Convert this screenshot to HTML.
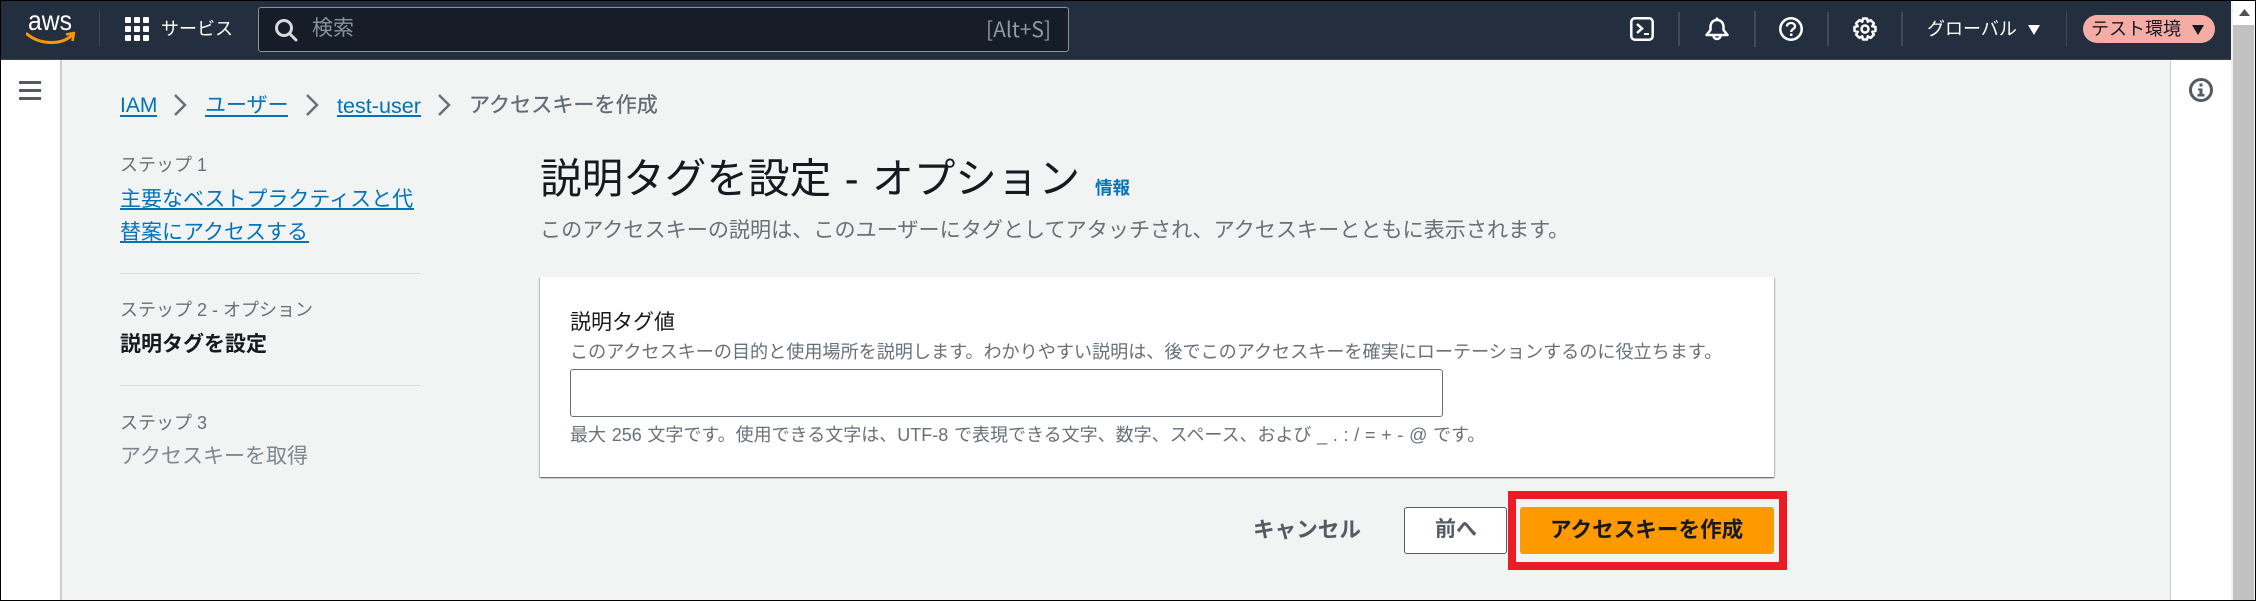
<!DOCTYPE html>
<html lang="ja">
<head>
<meta charset="utf-8">
<title>説明タグを設定</title>
<style>
html,body{margin:0;padding:0;width:2256px;height:601px;overflow:hidden;background:#000}
body{position:relative;font-family:"Liberation Sans","Noto Sans CJK JP",sans-serif}
.a{position:absolute}
.t{position:absolute;white-space:nowrap;line-height:30px;height:30px}
a{color:#0073bb;text-decoration:none}
.u{border-bottom:0;background:#0073bb}
.d{position:absolute;width:2px;background:#414b58;top:12px;height:34px}
</style>
</head>
<body>
<!-- frame -->
<div class="a" style="left:1px;top:1px;width:2254px;height:599px;background:#f2f3f3"></div>
<!-- header -->
<div class="a" style="left:1px;top:1px;width:2230px;height:58px;background:#232f3e;border-bottom:1px solid #3b4450"></div>
<svg class="a" style="left:26px;top:10px" width="50" height="36" viewBox="0 0 50 36">
<text x="2" y="20" font-family="Liberation Sans" font-size="28" fill="#fff" textLength="44" lengthAdjust="spacingAndGlyphs">aws</text>
<path d="M1 24C14 35 35 35 45 26" fill="none" stroke="#f90" stroke-width="3" stroke-linecap="round"/>
<path d="M40 24.5L48 23L46.5 31" fill="none" stroke="#f90" stroke-width="2.5" stroke-linejoin="round"/>
</svg>
<div class="a" style="left:99px;top:12px;width:1px;height:34px;background:#414b58"></div>
<svg class="a" style="left:125px;top:17px" width="24" height="24" fill="#fff">
<rect x="0" y="0" width="6" height="6" rx="1"/><rect x="9" y="0" width="6" height="6" rx="1"/><rect x="18" y="0" width="6" height="6" rx="1"/>
<rect x="0" y="9" width="6" height="6" rx="1"/><rect x="9" y="9" width="6" height="6" rx="1"/><rect x="18" y="9" width="6" height="6" rx="1"/>
<rect x="0" y="18" width="6" height="6" rx="1"/><rect x="9" y="18" width="6" height="6" rx="1"/><rect x="18" y="18" width="6" height="6" rx="1"/>
</svg>
<div class="t" style="left:161px;top:14px;font-size:18px;color:#fff">サービス</div>
<!-- search -->
<div class="a" style="left:258px;top:7px;width:809px;height:43px;background:#161d29;border:1px solid #879596;border-radius:3px"></div>
<svg class="a" style="left:274px;top:18px" width="24" height="24" fill="none" stroke="#d5dbdb" stroke-width="3">
<circle cx="10" cy="10" r="7.5"/><path d="M15.5 15.5L22 22" stroke-linecap="round"/>
</svg>
<div class="t" style="left:312px;top:14px;font-size:21px;color:#879596">検索</div>
<div class="t" style="left:986px;top:14px;font-size:21px;color:#8d9ba4;font-family:'Noto Sans CJK JP',sans-serif">[Alt+S]</div>
<!-- header right -->
<svg class="a" style="left:1630px;top:17px" width="24" height="24" fill="none" stroke="#fff" stroke-width="2.5">
<rect x="1.3" y="1.3" width="21.4" height="21.4" rx="3.5"/><path d="M7 7L12 11.5L7 16"/><path d="M14 17H19" stroke-width="2"/>
</svg>
<div class="d" style="left:1678px"></div>
<svg class="a" style="left:1705px;top:16px" width="24" height="26" fill="none" stroke="#fff" stroke-width="2.5">
<path d="M12 1.5V4M5.5 14V11C5.5 7 8 4 12 4S18.500 7 18.500 11V14L22.500 19H1.500Z" stroke-linejoin="round"/>
<path d="M8.500 19.500A3.500 3.500 0 0 0 15.500 19.500"/>
</svg>
<div class="d" style="left:1754px;top:11px;height:36px"></div>
<svg class="a" style="left:1779px;top:17px" width="24" height="24" fill="none" stroke="#fff" stroke-width="2.5">
<circle cx="12" cy="12" r="10.700"/>
<path d="M8 9.500C8 7 10 6 12 6S16 7.200 16 9.500C16 12 12.200 12 12.200 15" stroke-width="2.300"/>
<path d="M12.200 16.500V19" stroke-width="2.500"/>
</svg>
<div class="d" style="left:1827px"></div>
<svg class="a" style="left:1853px;top:17px" width="24" height="24" fill="none" stroke="#fff" stroke-width="2.500">
<circle cx="12" cy="12" r="3.500"/>
<path d="M10 1.500H14L14.800 4.700L17.600 3.100L20.900 6.400L19.300 9.200L22.500 10V14L19.300 14.800L20.900 17.600L17.600 20.900L14.800 19.300L14 22.500H10L9.200 19.300L6.400 20.900L3.100 17.600L4.700 14.800L1.500 14V10L4.700 9.200L3.100 6.400L6.400 3.100L9.200 4.700Z" stroke-linejoin="round"/>
</svg>
<div class="d" style="left:1901px"></div>
<div class="t" style="left:1927px;top:14px;font-size:18px;color:#fff">グローバル</div>
<svg class="a" style="left:2028px;top:25px" width="12" height="10"><path d="M0 0H12L6 10Z" fill="#fff"/></svg>
<div class="a" style="left:2066px;top:12px;width:1px;height:34px;background:#414b58"></div>
<div class="a" style="left:2083px;top:15px;width:132px;height:28px;background:#f4aca5;border-radius:14px"></div>
<div class="t" style="left:2091px;top:14px;font-size:18px;color:#16191f">テスト環境</div>
<svg class="a" style="left:2192px;top:25px" width="12" height="10"><path d="M0 0H12L6 10Z" fill="#16191f"/></svg>
<!-- left nav -->
<div class="a" style="left:1px;top:60px;width:59px;height:540px;background:#fff;border-right:2px solid #c9cdcf"></div>
<div class="a" style="left:19px;top:81px;width:22px;height:3px;background:#545b64"></div>
<div class="a" style="left:19px;top:89px;width:22px;height:3px;background:#545b64"></div>
<div class="a" style="left:19px;top:97px;width:22px;height:3px;background:#545b64"></div>
<!-- right panel -->
<div class="a" style="left:2170px;top:60px;width:61px;height:540px;background:#fff;border-left:1px solid #c9cdcf;box-sizing:border-box"></div>
<svg class="a" style="left:2189px;top:78px" width="24" height="24">
<circle cx="12" cy="12" r="10.500" fill="none" stroke="#545b64" stroke-width="3"/>
<rect x="10.500" y="5.500" width="3" height="3" fill="#545b64"/>
<path d="M9 10.500H13.500V16H15.500V18.500H8.500V16H10.500V12.500H9Z" fill="#545b64"/>
</svg>
<!-- scrollbar -->
<div class="a" style="left:2231px;top:1px;width:24px;height:599px;background:#f1f1f1"></div>
<div class="a" style="left:2233px;top:1px;width:22px;height:24px;background:#fff"></div>
<svg class="a" style="left:2239px;top:9px" width="11" height="7"><path d="M0 7L5.500 0L11 7Z" fill="#505050"/></svg>
<div class="a" style="left:2233px;top:25px;width:21px;height:575px;background:#c1c1c1"></div>
<!-- breadcrumb -->
<div class="t" style="left:120px;top:91px;font-size:21px;color:#0073bb">IAM</div>
<div class="a u" style="left:120px;top:115px;width:37px;height:2px"></div>
<svg class="a" style="left:172px;top:93px" width="16" height="24" fill="none" stroke="#687078" stroke-width="2.500"><path d="M3 2L13 12L3 22"/></svg>
<div class="t" style="left:205px;top:91px;font-size:21px;color:#0073bb">ユーザー</div>
<div class="a u" style="left:205px;top:115px;width:83px;height:2px"></div>
<svg class="a" style="left:304px;top:93px" width="16" height="24" fill="none" stroke="#687078" stroke-width="2.500"><path d="M3 2L13 12L3 22"/></svg>
<div class="t" style="left:337px;top:91px;font-size:21.600px;color:#0073bb">test-user</div>
<div class="a u" style="left:337px;top:115px;width:84px;height:2px"></div>
<svg class="a" style="left:436px;top:93px" width="16" height="24" fill="none" stroke="#687078" stroke-width="2.500"><path d="M3 2L13 12L3 22"/></svg>
<div class="t" style="left:469px;top:91px;font-size:21.100px;color:#626a72;-webkit-text-stroke:.3px #626a72">アクセスキーを作成</div>
<!-- steps -->
<div class="t" style="left:120px;top:150px;font-size:18px;color:#687078">ステップ 1</div>
<div class="t" style="left:120px;top:185px;font-size:21px;color:#0073bb">主要なベストプラクティスと代</div>
<div class="a u" style="left:120px;top:208px;width:294px;height:2px"></div>
<div class="t" style="left:120px;top:218px;font-size:21px;color:#0073bb">替案にアクセスする</div>
<div class="a u" style="left:120px;top:241px;width:189px;height:2px"></div>
<div class="a" style="left:120px;top:273px;width:300px;height:1px;background:#d5dbdb"></div>
<div class="t" style="left:120px;top:295px;font-size:18px;color:#687078">ステップ 2 - オプション</div>
<div class="t" style="left:120px;top:330px;font-size:21px;font-weight:700;color:#16191f">説明タグを設定</div>
<div class="a" style="left:120px;top:385px;width:300px;height:1px;background:#d5dbdb"></div>
<div class="t" style="left:120px;top:408px;font-size:18px;color:#687078">ステップ 3</div>
<div class="t" style="left:120px;top:442px;font-size:21px;color:#7d878f">アクセスキーを取得</div>
<!-- title -->
<div class="t" style="left:540px;top:164px;font-size:41.600px;word-spacing:2px;color:#16191f">説明タグを設定 - オプション</div>
<div class="t" style="left:1095px;top:173px;font-size:17.500px;font-weight:700;color:#0073bb">情報</div>
<div class="t" style="left:540px;top:216px;font-size:21.120px;color:#687078">このアクセスキーの説明は、このユーザーにタグとしてアタッチされ、アクセスキーとともに表示されます。</div>
<!-- card -->
<div class="a" style="left:540px;top:277px;width:1234px;height:200px;background:#fff;box-shadow:0 1px 1px 0 rgba(0,28,36,.5),1px 1px 1px 0 rgba(0,28,36,.2),-1px 1px 1px 0 rgba(0,28,36,.2)"></div>
<div class="t" style="left:570px;top:308px;font-size:21px;color:#16191f">説明タグ値</div>
<div class="t" style="left:570px;top:337px;font-size:18.100px;color:#687078">このアクセスキーの目的と使用場所を説明します。わかりやすい説明は、後でこのアクセスキーを確実にローテーションするのに役立ちます。</div>
<div class="a" style="left:570px;top:369px;width:873px;height:48px;box-sizing:border-box;background:#fff;border:1.500px solid #687078;border-radius:3px"></div>
<div class="t" style="left:570px;top:420px;font-size:18px;word-spacing:.7px;color:#687078">最大 256 文字です。使用できる文字は、UTF-8 で表現できる文字、数字、スペース、および _ . : / = + - @ です。</div>
<!-- buttons -->
<div class="t" style="left:1253px;top:515px;font-size:21.600px;font-weight:700;color:#545b64">キャンセル</div>
<div class="a" style="left:1404px;top:507px;width:103px;height:47px;box-sizing:border-box;background:#fff;border:1.500px solid #545b64;border-radius:3px"></div>
<div class="t" style="left:1435px;top:515px;font-size:21px;font-weight:700;color:#545b64">前へ</div>
<div class="a" style="left:1520px;top:507px;width:254px;height:47px;background:#f90;border-radius:3px"></div>
<div class="t" style="left:1550px;top:515px;font-size:21.600px;font-weight:700;color:#16191f">アクセスキーを作成</div>
<!-- red highlight -->
<div class="a" style="left:1508px;top:491px;width:279px;height:79px;box-sizing:border-box;border:8px solid #ed1c24"></div>
</body>
</html>
